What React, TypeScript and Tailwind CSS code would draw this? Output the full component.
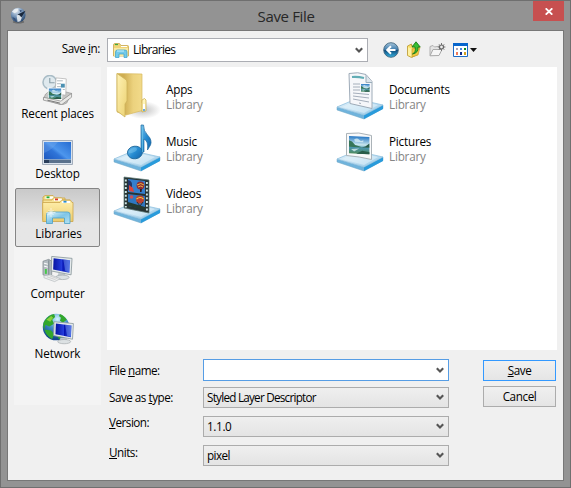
import React from "react";

type IconProps = { className?: string };

function GlobeLogo() {
  return (
    <svg width="17" height="17" viewBox="0 0 18 18">
      <defs>
        <radialGradient id="logo" cx="38%" cy="22%" r="80%">
          <stop offset="0" stopColor="#e3eaf1" />
          <stop offset=".5" stopColor="#7594b8" />
          <stop offset="1" stopColor="#27466c" />
        </radialGradient>
      </defs>
      <ellipse cx="9" cy="15.8" rx="6" ry="1.8" fill="#6b6b6b" />
      <circle cx="8.7" cy="8.5" r="7.8" fill="url(#logo)" />
      <path d="M2 5l3-3 4-.5-1 3-3 2zM7 9l3-1 3 2-2 5-3 1z" fill="#eef2f5" opacity=".85" />
      <path d="M8 8l8.500-4-4.500 7-1.500-2z" fill="#1a283c" />
      <path d="M2.500 10.500l3 1.500 1.500 3.500-3-2zM10 3l3 1-2 1.500z" fill="#35517a" />
    </svg>
  );
}

function LibrariesIcon({ className }: IconProps) {
  return (
    <svg className={className} viewBox="0 0 32 30">
      <defs>
        <linearGradient id="libf" x1="0" y1="0" x2="0" y2="1">
          <stop offset="0" stopColor="#fff0ae" />
          <stop offset="1" stopColor="#eccc6d" />
        </linearGradient>
        <linearGradient id="libb" x1="0" y1="0" x2="1" y2="1">
          <stop offset="0" stopColor="#e8f8fd" />
          <stop offset=".5" stopColor="#7fc5e6" />
          <stop offset="1" stopColor="#b6e3f3" />
        </linearGradient>
      </defs>
      <path d="M1 2l2-1.500h8L13 3h10v18H1z" fill="#f3dc88" stroke="#cda74a" strokeWidth=".8" />
      <path d="M3.500 1.400h8v2.400h-8z" fill="#fff" /><path d="M4.500 1.400h3v1.800h-3z" fill="#21ad36" />
      <path d="M1 5h9l1.500-2.200h8L21 5h7v20H1z" fill="#f7e398" stroke="#cda74a" strokeWidth=".8" />
      <path d="M12 3.600h8v2.200h-8z" fill="#fff" /><path d="M13 3.500h3v1.800h-3z" fill="#db3b29" />
      <path d="M.7 7.500H18l1.500-2.300h9L30 7.500h1v19H.7z" fill="url(#libf)" stroke="#cba44a" strokeWidth=".8" />
      <path d="M20 6h8v2h-8z" fill="#fff" /><path d="M21.500 5.800h3v1.800h-3z" fill="#278bcf" />
      <path d="M4.500 28.500V19.500q0-2.500 2.500-2.500h18.500q2.500 0 2.500 2.500v9h-5.500v-5.500H10.500v5.500z" fill="url(#libb)" stroke="#4a9fc8" strokeWidth=".8" />
      <path d="M9 13v9M4.500 17.500h9M6.500 15l5 5M11.500 15l-5 5" stroke="#fff" strokeWidth=".8" opacity=".8" />
    </svg>
  );
}

function SmallLibrariesIcon() {
  return (
    <svg width="16" height="15" viewBox="0 0 16 15">
      <path d="M.5 13V2Q.5.500 2 .5h4.500L8 2.500h6.500q1 0 1 1V13z" fill="#f0d477" stroke="#c9a74e" strokeWidth=".8" />
      <path d="M1 5h14v8H1z" fill="#f9e9a4" />
      <path d="M2 1.500h3" stroke="#3eaa3f" strokeWidth="1.200" />
      <path d="M8 3.500h6" stroke="#fff" />
      <path d="M2.500 14.500V9Q2.500 7 4.500 7h7.500q2 0 2 2v5.500h-3V11H6v3.500z" fill="#73c9e9" stroke="#38a0cc" strokeWidth=".7" />
      <path d="M4 8h7" stroke="#c9f2fc" />
    </svg>
  );
}

function Chevron() {
  return (
    <svg className="mr-1 shrink-0" width="8" height="7" viewBox="0 0 8 7">
      <path d="M.8 1.300L4 4.500l3.200-3.200" fill="none" stroke="#555" strokeWidth="2.100" />
    </svg>
  );
}

function BackIcon() {
  return (
    <svg width="16" height="16" viewBox="0 0 16 16">
      <defs>
        <linearGradient id="bk" x1="0" y1="0" x2="0" y2="1">
          <stop offset="0" stopColor="#a9c7dc" /><stop offset=".48" stopColor="#3c7bad" />
          <stop offset=".5" stopColor="#0d4779" /><stop offset="1" stopColor="#36b3e0" />
        </linearGradient>
      </defs>
      <circle cx="8" cy="8" r="7.300" fill="url(#bk)" stroke="#42667f" strokeWidth=".9" />
      <path d="M12.500 8H4.500M8 4.200L4.200 8 8 11.800" fill="none" stroke="#fff" strokeWidth="2" />
    </svg>
  );
}

function UpIcon() {
  return (
    <svg width="16" height="17" viewBox="0 0 16 17">
      <path d="M1.500 5l4-2v2l5-.5V14l-5 2.500-4-2z" fill="#f7dd65" stroke="#ba9832" strokeWidth=".8" />
      <path d="M2 6l4 2v8l-4-2z" fill="#fff2a0" /><path d="M6 8l8-2-2 8-6 2z" fill="#f0c93e" stroke="#c49b2d" strokeWidth=".7" />
      <path d="M6.500 13q4-2 2.500-7H6L10 .8l4.200 5.200h-2.200q.5 6-5.500 7z" fill="#38bf31" stroke="#167a1d" strokeWidth=".9" />
    </svg>
  );
}

function NewFolderIcon() {
  return (
    <svg width="17" height="14" viewBox="0 0 17 14">
      <path d="M1 12.500V3.500l3-1 1.500 1.500 5.500-1v7l-3 2.500z" fill="#e4e4e4" stroke="#b0b0b0" />
      <path d="M1 12.800L4 6.500h9l-3 6z" fill="#f6f6f6" stroke="#aaa" />
      <path d="M12.500 0v8M8.800 4h7.600M10 1.300l5.200 5.400M15.200 1.300L10 6.700" stroke="#777" strokeWidth="1" />
      <circle cx="12.500" cy="4" r="2" fill="#eee" stroke="#666" strokeWidth="1.200" />
    </svg>
  );
}

function ViewIcon() {
  return (
    <svg width="24" height="14" viewBox="0 0 24 14">
      <path d="M.5.500h14v13H.5z" fill="#fff" stroke="#1e6bc5" />
      <path d="M0 0h15v3H0z" fill="#0765cc" />
      <path d="M3 5h2v2H3z" fill="#a7a3b5" /><path d="M7 5h2v2H7z" fill="#4786dd" /><path d="M11 5h2v2h-2z" fill="#078b22" />
      <path d="M3 9h2v3H3z" fill="#ef7b5b" /><path d="M7 9h2v3H7z" fill="#102c8b" /><path d="M11 9h2v3h-2z" fill="#d5a01e" />
      <path d="M17 5h7l-3.500 4z" fill="#111" />
    </svg>
  );
}

function Landscape({ id }: { id: string }) {
  return (
    <>
      <defs>
        <linearGradient id={id} x1="0" y1="0" x2="0" y2="1">
          <stop offset="0" stopColor="#2879c5" /><stop offset=".48" stopColor="#cbe8ef" />
          <stop offset=".65" stopColor="#4a94ae" /><stop offset="1" stopColor="#4e8b5c" />
        </linearGradient>
      </defs>
      <path d="M0 0h20v16H0z" fill={`url(#${id})`} />
      <path d="M0 9V4l3 1 3 3 4 1 3 1H0z" fill="#367658" />
      <path d="M20 6l-4 3-4 1h8zM20 14l-7-1-6 3h13z" fill="#285c49" />
      <path d="M5 3q3-2 5 0t4 0v2H6zM2 12l8-1-5 3z" fill="#ddf2f5" opacity=".75" />
    </>
  );
}

function RecentIcon({ className }: IconProps) {
  return (
    <svg className={className} viewBox="0 0 32 31">
      <path d="M3 20l7-6 20 5-5 10-5 2L1 25z" fill="#c7c7c5" stroke="#888" strokeWidth=".6" />
      <circle cx="7.500" cy="7.500" r="7" fill="#dfe9ee" stroke="#a9bcc6" strokeWidth="1.600" />
      <path d="M7.500 3v5h5" fill="none" stroke="#8ca0a9" strokeWidth="1.200" />
      <path d="M14 3l10.500 1-.5 17-11-2z" fill="#fff" stroke="#aaa" strokeWidth=".7" />
      <path d="M15 6h6M15 9h4M15 12h4M20 15h3" stroke="#9aa6ad" strokeWidth=".8" />
      <path d="M19 9h4v4h-4z" fill="#4b90b2" />
      <path d="M5 13l16 1-1 13-14-2z" fill="#fff" />
      <g transform="translate(6.500 14) scale(.64 .68)"><Landscape id="ls1" /></g>
      <path d="M1 23l18 4 11-8v4l-10 7.500L1 26z" fill="#e9e9e7" stroke="#858585" strokeWidth=".7" />
      <path d="M5 26l13 3" stroke="#777" />
    </svg>
  );
}

function DesktopIcon({ className }: IconProps) {
  return (
    <svg className={className} viewBox="0 0 31 25">
      <defs>
        <linearGradient id="desk" x1="0" y1="1" x2="1" y2="0">
          <stop offset="0" stopColor="#1851b8" /><stop offset=".45" stopColor="#2f74d8" />
          <stop offset=".55" stopColor="#4d96ed" /><stop offset="1" stopColor="#256cd2" />
        </linearGradient>
      </defs>
      <path d="M.5.500h30v24H.5z" fill="#d9e2ed" stroke="#a2adbb" />
      <path d="M2 2h27v21H2z" fill="url(#desk)" />
      <path d="M2 19.500h27V23H2z" fill="#5a718c" /><path d="M2 19.500h27" stroke="#99b1cc" strokeWidth=".8" /><path d="M2 20h5v3H2z" fill="#283c59" />
      <path d="M2 2h14Q10 10 2 13z" fill="#75a8ec" opacity=".35" />
    </svg>
  );
}

function Monitor({ id }: { id: string }) {
  return (
    <>
      <defs>
        <linearGradient id={id} x1="0" y1="0" x2="1" y2="0">
          <stop offset="0" stopColor="#0714a2" /><stop offset=".54" stopColor="#263fe0" />
          <stop offset=".56" stopColor="#0715b2" /><stop offset="1" stopColor="#3a5be3" />
        </linearGradient>
      </defs>
      <path d="M8 17l7 1v4l-8-2z" fill="#bfc7cc" />
      <ellipse cx="12" cy="21.600" rx="7" ry="2.300" fill="#dce1e3" stroke="#a0a7aa" strokeWidth=".7" />
      <path d="M1 0l21 2-1 17L.5 15z" fill="#e5ebec" stroke="#8f9b9f" strokeWidth=".9" />
      <path d="M3 2l17 2-.7 12.800L2.500 13.500z" fill={`url(#${id})`} />
      <path d="M13 3.300l6.700.7-.6 12-4-.8z" fill="#87a9f2" opacity=".4" />
    </>
  );
}

function ComputerIcon({ className }: IconProps) {
  return (
    <svg className={className} viewBox="0 0 32 29">
      <path d="M1 6l6-2 3 2v14l-4 2-5-2z" fill="#b4bcc1" stroke="#788389" strokeWidth=".7" />
      <path d="M2 8l4 1M2 11l4 1" stroke="#fff" /><path d="M7 5v16" stroke="#788389" /><path d="M3 14h2v5H3z" fill="#45ca48" />
      <g transform="translate(9 1)"><Monitor id="scr1" /></g>
      <path d="M2 21l7-1 10 4-6 3L2 23z" fill="#eceeef" stroke="#b4babd" strokeWidth=".7" />
      <path d="M5 22l9 3M8 21l8 3" stroke="#c4c4c4" strokeWidth=".7" />
    </svg>
  );
}

function NetworkIcon({ className }: IconProps) {
  return (
    <svg className={className} viewBox="0 0 32 33">
      <defs>
        <radialGradient id="earth" cx="55%" cy="20%" r="75%">
          <stop offset="0" stopColor="#d3f6ff" /><stop offset=".5" stopColor="#438fc9" /><stop offset="1" stopColor="#12488c" />
        </radialGradient>
      </defs>
      <circle cx="14" cy="14.500" r="13.700" fill="url(#earth)" />
      <path d="M3 7q3-5 9-6l1 3-3 3 2 4-5 3-4-2-1 5Q-1 11 3 7zM2 17l7 1 3 4-2 5Q4 24 2 17zM18 1q5 2 7 6l-4 3-3-2 1-3-2-2zM14 21l7 3-4 3z" fill="#32a72b" />
      <path d="M4 7l5-4 2 2-3 4z" fill="#a0d944" opacity=".8" />
      <g transform="translate(11 9) scale(.95)"><Monitor id="scr2" /></g>
    </svg>
  );
}

function Tray({ id }: { id: string }) {
  return (
    <>
      <defs>
        <linearGradient id={id} x1="0" y1="0" x2="1" y2="1">
          <stop offset="0" stopColor="#e2f2fb" /><stop offset=".5" stopColor="#c3e0f2" /><stop offset="1" stopColor="#8cc4e5" />
        </linearGradient>
      </defs>
      <path d="M1 35l27 8 19-10v3.500L28 47 1 38z" fill="#6fb3dc" stroke="#6da4c4" strokeWidth=".5" />
      <path d="M1 35l19-8 27 6-19 10z" fill={`url(#${id})`} stroke="#91c2df" strokeWidth=".8" />
      <path d="M28 43.500l19-10V37L28 47z" fill="#299bdb" />
      <path d="M6 35l15-6.500 21 4.500-14 8z" fill="#eef8fc" opacity=".45" />
    </>
  );
}

function AppsIcon() {
  return (
    <svg width="48" height="49" viewBox="0 0 48 49">
      <defs>
        <linearGradient id="fold" x1="0" y1="0" x2="1" y2="1"><stop offset="0" stopColor="#fff2b5" /><stop offset="1" stopColor="#ebd171" /></linearGradient>
        <linearGradient id="back" x1="0" y1="0" x2="1" y2="0"><stop offset=".25" stopColor="#cfae52" /><stop offset=".6" stopColor="#ecd27e" /><stop offset="1" stopColor="#f3dc8c" /></linearGradient>
        <radialGradient id="shade"><stop offset="0" stopColor="#777" stopOpacity=".45" /><stop offset="1" stopColor="#777" stopOpacity="0" /></radialGradient>
      </defs>
      <ellipse cx="30" cy="38" rx="18" ry="9" fill="url(#shade)" />
      <path d="M4 1.500l25 .5v29l2 1v6L13 43 4 40z" fill="url(#back)" stroke="#d7b95e" strokeWidth=".7" />
      <path d="M4 1.500l8 5.500q2 1 2 3v19l-2 3v13l-8-6z" fill="url(#fold)" stroke="#cdb25c" strokeWidth=".8" />
      <path d="M29 28q3-3 4 0v11l-4 1z" fill="#fff4b9" stroke="#c6a846" strokeWidth=".7" />
      <path d="M31 32v7" stroke="#fff" strokeWidth="2" /><path d="M31 37v2" stroke="#338fd8" strokeWidth="1.500" />
    </svg>
  );
}

function DocumentsIcon() {
  return (
    <svg width="48" height="49" viewBox="0 0 48 49">
      <Tray id="trd" />
      <path d="M13 1.500q9-2 17 1l6 7v27l-22-5z" fill="#f6f7fa" stroke="#9eabb8" strokeWidth="1" />
      <path d="M30 3v7.500h6" fill="#dce5ec" stroke="#9baebb" />
      <path d="M16 5q6-.5 12 1" fill="none" stroke="#62adb5" strokeWidth="2" />
      <path d="M17 12h7M17 15h7M17 18h7M17 21l16 1.500M17 24l16 2M17 27l16 3M23 31l2 .5" stroke="#9ba5b3" strokeWidth=".9" />
      <g transform="translate(25 12) scale(.43 .48)"><Landscape id="ls2" /></g>
    </svg>
  );
}

function MusicIcon() {
  return (
    <svg width="48" height="49" viewBox="0 0 48 49">
      <defs><linearGradient id="note" x1="0" y1="0" x2="1" y2="1"><stop offset="0" stopColor="#75c2ee" /><stop offset=".5" stopColor="#258bd1" /><stop offset="1" stopColor="#1463a9" /></linearGradient></defs>
      <Tray id="trm" />
      <path d="M28 1l2.500 0q0 6 4 10 5 5 3 10l-3 5q1-9-3.500-11v13h-3z" fill="url(#note)" stroke="#216a9d" strokeWidth=".7" />
      <ellipse cx="22" cy="28.500" rx="7.500" ry="6.300" fill="url(#note)" stroke="#216a9d" strokeWidth=".9" transform="rotate(-8 22 29)" />
      <ellipse cx="20" cy="26.500" rx="4.500" ry="2" fill="#93d7f5" opacity=".35" transform="rotate(-25 20 27)" />
      <path d="M29.500 3v25" stroke="#6dc5ea" strokeWidth=".7" />
    </svg>
  );
}

function PicturesIcon() {
  return (
    <svg width="48" height="49" viewBox="0 0 48 49">
      <Tray id="trp" />
      <path d="M10.500 9.500q12-2 25 2v24q-12-3-25-4z" fill="#f8f9fa" stroke="#a2aab0" strokeWidth=".9" />
      <g transform="translate(13 12) skewY(3) scale(1.020 1.080)"><Landscape id="ls3" /></g>
    </svg>
  );
}

function VideosIcon() {
  return (
    <svg width="48" height="49" viewBox="0 0 48 49">
      <Tray id="trv" />
      <path d="M11 1l25 3v33l-25-5z" fill="#263334" stroke="#5a7774" strokeWidth=".7" />
      <path d="M12.800 3.500v28M33.900 6v29" stroke="#cfe6e5" strokeWidth="1.900" strokeDasharray="2 1.800" />
      <path d="M15 3l17 2v13l-17-2z" fill="#347fce" /><path d="M15 18l17 2v13l-17-3z" fill="#2e77c1" />
      <path d="M15 4q5 1 4 7l-4 3z" fill="#243668" /><path d="M16 9l4 3 1 4-5-1z" fill="#d9443b" />
      <circle cx="27.500" cy="9.500" r="3.900" fill="#8f2b35" /><path d="M24 9q4-3 7 0M25 11q3-2 5 0" fill="none" stroke="#e8b941" /><path d="M27 13h2l-.5 3H27z" fill="#321e1e" />
      <circle cx="27" cy="23.500" r="4" fill="#b9402f" /><path d="M23.500 23q4-3 7 0" fill="none" stroke="#efc944" strokeWidth="1.200" /><path d="M24 26l3 4 3-4" fill="none" stroke="#352c2d" />
      <path d="M15 26l17 5v3l-17-4z" fill="#24392f" /><circle cx="18.500" cy="21" r="1.800" fill="#c84f56" />
    </svg>
  );
}

const places = [
  { name: "Recent places", Icon: RecentIcon, size: "mt-[6px] h-[30px] w-8", text: "tracking-[-0.15px]" },
  { name: "Desktop", Icon: DesktopIcon, size: "mt-[11px] h-[25px] w-[31px]", text: "tracking-[-0.1px]" },
  { name: "Libraries", Icon: LibrariesIcon, size: "mt-[6px] h-[30px] w-8", text: "tracking-[-0.1px] pl-0.5" },
  { name: "Computer", Icon: ComputerIcon, size: "mt-[6px] h-[29px] w-[31px]", text: "tracking-[-0.1px]" },
  { name: "Network", Icon: NetworkIcon, size: "mt-[4px] h-[32px] w-8", text: "tracking-[-0.1px]" },
];

const libraries = [
  { name: "Apps", Icon: AppsIcon },
  { name: "Documents", Icon: DocumentsIcon },
  { name: "Music", Icon: MusicIcon },
  { name: "Pictures", Icon: PicturesIcon },
  { name: "Videos", Icon: VideosIcon },
];

function Places() {
  return (
    <nav className="h-[338px] w-[87px] bg-[#f4f4f4] pt-px">
      {places.map(({ name, Icon, size, text }) => (
        <div key={name} className="flex h-[60px] px-px">
          <button
            className={
              name === "Libraries"
                ? "flex h-[59px] w-[85px] flex-col items-center rounded-[2px] border border-[#858585] bg-linear-to-b from-[#c9c9c9] to-[#e6e6e6] to-60%"
                : "flex h-[59px] w-[85px] flex-col items-center border border-transparent"
            }
          >
            <span className="flex h-[37px] shrink-0 items-start">
              <Icon className={`${size} shrink-0`} />
            </span>
            <span className={`whitespace-nowrap leading-[14px] ${text}`}>{name}</span>
          </button>
        </div>
      ))}
    </nav>
  );
}

function Select({ value, className }: { value: string; className: string }) {
  return (
    <div className={`flex w-[246px] items-center justify-between border pl-[3px] ${className}`}>
      <span>{value}</span>
      <Chevron />
    </div>
  );
}

const closed = "h-[21px] border-[#acacac] bg-linear-to-b from-[#efefef] to-[#e4e4e4]";

export default function App() {
  return (
    <div className="h-[488px] w-[571px] overflow-hidden border border-[#6f6f6f] bg-[#939393] px-[6px] font-['Open_Sans','Noto_Sans',sans-serif] text-[11.7px] leading-[15px] text-black">
      <header className="flex h-[29px] items-start">
        <div className="mt-[6px] ml-[3px] w-[41px]"><GlobeLogo /></div>
        <h1 className="mt-[5px] flex-1 text-center text-[15px] leading-5 tracking-[-0.35px] text-[#272727]"><span className="ml-[-12px]">Save File</span></h1>
        <button className="flex h-5 w-[31px] items-center justify-center bg-[#c75050]">
          <svg width="8" height="7" viewBox="0 0 8 7"><path d="M.7.300l6.600 6.400M7.300.300L.7 6.700" stroke="#fff" strokeWidth="1.800" /></svg>
        </button>
      </header>
      <main className="h-[451px] w-[557px] border border-[#777] bg-[#f0f0f0] pt-[7px] pl-[6px]">
        <div className="flex h-[29px] items-start">
          <label className="mt-[3px] w-[86px] text-right tracking-[-0.4px]">Save <u>i</u>n:</label>
          <div className="ml-[7px] flex h-6 w-[261px] items-center border border-[#abadb3] bg-white">
            <div className="ml-[5px]"><SmallLibrariesIcon /></div>
            <span className="ml-1 flex-1 tracking-[-0.9px]"><span className="text-xs tracking-[-0.7px]">Libraries</span></span>
            <Chevron />
          </div>
          <div className="mt-[3px] ml-[15px] flex h-[17px] items-center">
            <BackIcon /><span className="ml-[7px]"><UpIcon /></span><span className="ml-[7px]"><NewFolderIcon /></span><span className="ml-[7px]"><ViewIcon /></span>
          </div>
        </div>
        <div className="flex gap-[6px]">
          <Places />
          <section className="w-[450px]">
            <div className="grid h-[283px] grid-cols-[223px_223px] grid-rows-[52px_52px_52px] bg-white pt-[5px] pl-[6px]">
              {libraries.map(({ name, Icon }) => (
                <div key={name} className="flex h-[52px]">
                  <Icon />
                  <div className="mt-[10px] ml-[5px] tracking-[-0.2px]">
                    <div>{name}</div>
                    <div className="text-[#858585]">Library</div>
                  </div>
                </div>
              ))}
            </div>
            <div className="flex pl-[2px] tracking-[-0.5px]">
              <div className="w-[94px] pt-[13px]">
                <div className="h-[27px]">File <u>n</u>ame:</div>
                <div className="h-[25px]">Save as <u>t</u>ype:</div>
                <div className="h-[30px]"><u>V</u>ersion:</div>
                <div><u>U</u>nits:</div>
              </div>
              <div className="pt-[9px]">
                <Select value="" className="mb-[6px] h-[22px] border-[#569de5] bg-white" />
                <Select value="Styled Layer Descriptor" className={`mb-2 tracking-[-0.75px] ${closed}`} />
                <Select value="1.1.0" className={`mb-2 tracking-[-0.35px] ${closed}`} />
                <Select value="pixel" className={`tracking-[-0.55px] ${closed}`} />
              </div>
              <div className="ml-[34px] pt-[10px]">
                <button className="mb-[5px] flex h-[21px] w-[73px] items-center justify-center border border-[#3399ff] bg-linear-to-b from-[#f0f0f0] to-[#e5e5e5] tracking-[-0.4px]"><span><u>S</u>ave</span></button>
                <button className="flex h-[21px] w-[73px] items-center justify-center border border-[#acacac] bg-linear-to-b from-[#f0f0f0] to-[#e5e5e5] tracking-[-0.4px]">Cancel</button>
              </div>
            </div>
          </section>
        </div>
      </main>
    </div>
  );
}
